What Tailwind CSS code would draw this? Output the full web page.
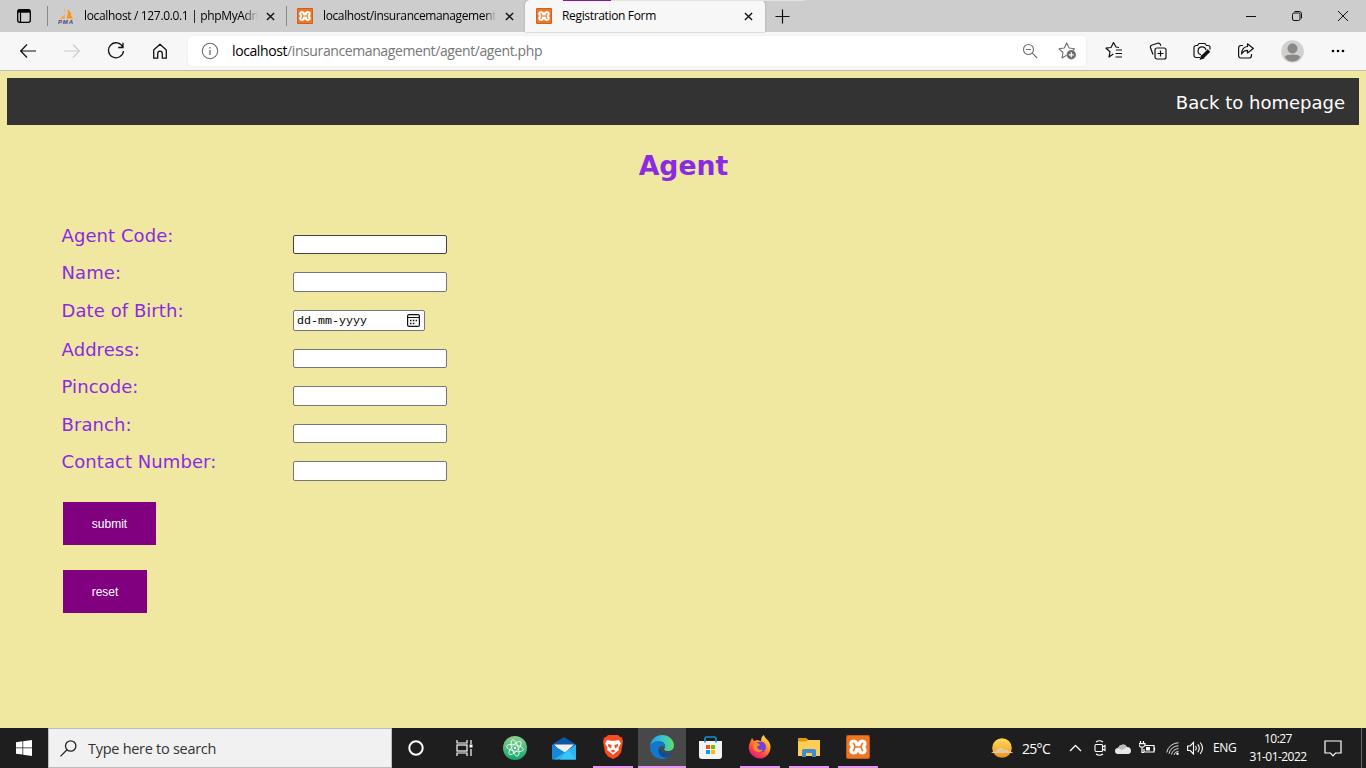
<!DOCTYPE html>
<html lang="en">
<head>
<meta charset="utf-8">
<title>Registration Form</title>
<script src="https://cdn.jsdelivr.net/npm/@tailwindcss/browser@4"></script>
</head>
<body class="w-[1366px] h-[768px] overflow-hidden flex flex-col bg-[#f0e7a0] font-['Open_Sans','Noto_Sans',sans-serif] text-black">
<svg class="hidden">
  <symbol id="xampp" viewBox="0 0 24 24">
    <rect width="24" height="24" rx="2" fill="#c8591a"/><rect x="1" y="1" width="22" height="22" rx="1.5" fill="#ee7724"/>
    <path d="M8 4.500Q10.500 4.500 12 7 13.500 4.500 16 4.500C20.500 4.500 22 9 19.300 12 22 15 20.500 19.500 16 19.500Q13.500 19.500 12 17 10.500 19.500 8 19.500C3.500 19.500 2 15 4.700 12 2 9 3.500 4.500 8 4.500z" fill="#fff"/>
    <path d="M7.500 8.500Q9 9.500 8.800 12T7.500 15.500M16.500 8.500Q15 9.500 15.200 12t1.300 3.500M9 12h6" fill="none" stroke="#ee7724" stroke-width="1.700" stroke-linecap="round"/>
  </symbol>
  <symbol id="x" viewBox="0 0 10 10"><path d="M1 1l8 8M9 1l-8 8" stroke="#111" stroke-width="1.500"/></symbol>
</svg>

<!-- Tab strip -->
<header class="h-8 shrink-0 flex items-center bg-[#cdcdcd] text-[12px] leading-4">
  <div class="w-[47px] flex justify-center"><svg width="16" height="16" viewBox="0 0 16 16" fill="none" stroke="#000"><rect x="1.700" y="1.700" width="12.600" height="12.600" rx="2" stroke-width="1.300"/><path d="M2 3.200h12" stroke-width="3"/><path d="M4.500 4v10" stroke-width="1.200"/></svg></div>
  <div class="w-px h-5 bg-[#8a8a8a]"></div>
  <div class="w-[238px] flex items-center pl-[10px]">
    <svg width="16" height="16" viewBox="0 0 16 16"><path d="M6.500 0C8 4 7 8 1.500 10.500h5.300z" fill="#f7a23a"/><path d="M9.500 1c3 3 5 6 5.500 9.500H8.500C10 7 10 4 9.500 1z" fill="#f79420"/><path d="M0 9.500q2-1 3 .5M12.500 6l3 4" stroke="#fbc98a" fill="none"/><text x="0" y="15.700" font-family="Liberation Sans" font-size="6" font-weight="700" font-style="italic" fill="#45486f" textLength="15">PMA</text></svg>
    <span class="ml-[10px] w-[174px] whitespace-nowrap tracking-[-0.34px] [mask-image:linear-gradient(to_right,black_92%,transparent)]">localhost / 127.0.0.1 | phpMyAdm</span>
    <svg class="ml-[8px]" width="9" height="9"><use href="#x"/></svg>
  </div>
  <div class="w-px h-5 bg-[#8a8a8a]"></div>
  <div class="w-[238px] flex items-center pl-[10px]">
    <svg width="16" height="16"><use href="#xampp"/></svg>
    <span class="ml-[10px] w-[173px] whitespace-nowrap tracking-[-0.38px] [mask-image:linear-gradient(to_right,black_94%,transparent)]">localhost/insurancemanagement</span>
    <svg class="ml-[9px]" width="9" height="9"><use href="#x"/></svg>
  </div>
  <div class="w-[240px] h-8 flex items-center rounded-t-[5px] bg-[#f7f7f7] pl-[11px] relative shadow-[0_0_2px_#999]">
    <svg width="16" height="16"><use href="#xampp"/></svg>
    <span class="ml-[10px] w-[174px] whitespace-nowrap tracking-[-0.34px]">Registration Form</span>
    <svg class="ml-[8px]" width="9" height="9"><use href="#x"/></svg>
    <div class="absolute left-[38px] top-0 w-[48px] h-px bg-[#881798]"></div>
    <div class="absolute left-[86px] top-0 w-[193px] h-px bg-[#e3e3e3]"></div>
  </div>
  <div class="w-[35px] flex justify-center"><svg width="15" height="15" viewBox="0 0 15 15"><path d="M7.500 .5v14M.5 7.500h14" stroke="#111" stroke-width="1.200"/></svg></div>
  <div class="ml-auto flex items-center">
    <div class="w-[46px] flex justify-center"><svg width="10" height="10"><path d="M0 5.500h10" stroke="#111"/></svg></div>
    <div class="w-[46px] flex justify-center"><svg width="10" height="10" viewBox="0 0 10 10" fill="none" stroke="#111"><rect x=".5" y="2" width="7.500" height="7.500" rx="1.500"/><path d="M2.500 .5H7a2.500 2.500 0 0 1 2.500 2.500v4.500"/></svg></div>
    <div class="w-[46px] flex justify-center"><svg width="10" height="10"><path d="M0 0l10 10M10 0L0 10" stroke="#111"/></svg></div>
  </div>
</header>

<!-- Toolbar -->
<div class="h-[39px] shrink-0 flex items-center bg-[#f7f7f7] border-b border-[#bcbcbc] pl-[6px]">
  <div class="w-11 flex justify-center"><svg width="16" height="14" viewBox="0 0 16 14" fill="none" stroke="#111" stroke-width="1.200"><path d="M.5 7H16M7 .5L.7 7 7 13.500"/></svg></div>
  <div class="w-11 flex justify-center"><svg width="16" height="14" viewBox="0 0 16 14" fill="none" stroke="#ccc" stroke-width="1.200"><path d="M0 7h15.500M9 .5L15.300 7 9 13.500"/></svg></div>
  <div class="w-11 flex justify-center"><svg width="18" height="18" viewBox="0 0 18 18" fill="none" stroke="#111" stroke-width="1.300"><path d="M15.800 5A7.500 7.500 0 1 0 16.500 9M16 .8V5.500h-4.800"/></svg></div>
  <div class="w-11 flex justify-center"><svg width="16" height="17" viewBox="0 0 16 17" fill="none" stroke="#111" stroke-width="1.300"><path d="M8 1.200L1.700 7v8.200h4V10.500a2.300 2.300 0 0 1 4.600 0v4.700h4V7z" stroke-linejoin="round"/></svg></div>
  <div class="ml-[6px] w-[898px] h-[30px] rounded-[4px] bg-white flex items-center pl-[13px] shadow-[0_0_2px_#e5e5e5]">
    <svg width="18" height="18" viewBox="0 0 18 18" fill="none" stroke="#6e6e6e" stroke-width="1.100"><circle cx="9" cy="9" r="7.700"/><path d="M9 8v5M9 5v1.500" stroke-width="1.300"/></svg>
    <div class="ml-[13px] w-[311px] whitespace-nowrap text-[14px] leading-5 tracking-[-0.4px] text-[#767676]"><span class="text-black">localhost</span>/insurancemanagement/agent/agent.php</div>
    <svg class="ml-[479px]" width="16" height="16" viewBox="0 0 16 16" fill="none" stroke="#6e6e6e" stroke-width="1.100"><circle cx="6.500" cy="6.500" r="5"/><path d="M10.200 10.200l5 4.800M4 6.500h5"/></svg>
    <svg class="ml-[20px]" width="19" height="18" viewBox="0 0 19 18" fill="none" stroke="#6e6e6e" stroke-width="1.100"><path d="M8.500 13.300L4 16l1-5.500L1 6.800l5.300-.8L8.700 1l2.400 5 5.400.8-2 2" stroke-linejoin="round"/><circle cx="13.300" cy="12.800" r="4.700" fill="#6e6e6e" stroke="none"/><path d="M13.300 10.300v5M10.800 12.800h5" stroke="#fff" stroke-width="1.200"/></svg>
  </div>
  <div class="ml-[6px] w-11 flex justify-center"><svg width="18" height="18" viewBox="0 0 18 18" fill="none" stroke="#111" stroke-width="1.200"><path d="M8.300 12.600L4 15.500l1-5.300L1 6.700l5-.7 2.500-5L11 5.500l3 .5M11 8.500h6M10.500 12H17M10.500 15.500H17" transform="translate(0 -.5)" stroke-linejoin="round"/></svg></div>
  <div class="w-11 flex justify-center"><svg width="18" height="18" viewBox="0 0 18 18" fill="none" stroke="#111" stroke-width="1.200"><rect x="6" y="6" width="11" height="11" rx="2"/><path d="M11.500 8.500v6M8.500 11.500h6M4 12.500L1.500 5.800Q1 4 2.500 3.300L8.600 1.200Q10.500.6 11.300 2.300l.5 1.500M1 3.800h1"/></svg></div>
  <div class="w-11 flex justify-center"><svg width="18" height="18" viewBox="0 0 18 18" fill="none" stroke="#111" stroke-width="1.200"><path d="M7 15.500H3a2 2 0 0 1-2-2V5.500a2 2 0 0 1 2-2h1.500L6 1.500h6l1.500 2H15a2 2 0 0 1 2 2v2M8 12.700a4 4 0 1 1 5-4.500"/><path d="M16 8.500L9.500 15" stroke-width="3.600"/><path d="M8.500 14l-1 3 3-1z" fill="#111"/></svg></div>
  <div class="w-11 flex justify-center pl-px"><svg width="17" height="18" viewBox="1 0 17 18" fill="none" stroke="#111" stroke-width="1.200"><path d="M6 3.500H4a2.500 2.500 0 0 0-2.400 2.500v7.500A2.500 2.500 0 0 0 4 16h8a2.500 2.500 0 0 0 2.500-2.500V12M10.500 1.800l5.800 4.700-5.800 4.500V8.300C8 8.300 6 9.500 4.500 12 4.800 7.500 7 4.800 10.500 4.500z" stroke-linejoin="round"/></svg></div>
  <div class="w-12 flex justify-center"><svg width="23" height="23" viewBox="0 0 23 23"><circle cx="11.500" cy="11.500" r="11.300" fill="#d2d0ce"/><circle cx="11.500" cy="8.500" r="5" fill="#8a8886"/><path d="M3.700 17c2-3.200 13.600-3.200 15.600 0-3.500 6-12 6-15.600 0z" fill="#8a8886"/></svg></div>
  <div class="w-11 flex justify-center"><svg width="14" height="4"><circle cx="2" cy="2" r="1.300"/><circle cx="7" cy="2" r="1.300"/><circle cx="12" cy="2" r="1.300"/></svg></div>
</div>

<!-- Page -->
<main class="h-[657px] shrink-0 pt-[7px] px-[7px] font-['DejaVu_Sans',sans-serif] text-[#8a2be2]">
  <nav class="h-[47px] bg-[#333] flex items-center justify-end pr-[14px] pt-[2px] text-[18px] text-white"><a>Back to homepage</a></nav>
  <h1 class="mt-[25px] h-8 leading-8 pl-px text-center text-[26.700px] font-bold">Agent</h1>
  <form class="mt-[44px] pl-[54.600px] text-[18px] tracking-[0.060px] leading-5 flex flex-col items-start">
    <div class="h-[37px] flex"><label class="w-[231.400px]">Agent Code:</label><input class="mt-[9px] w-[154px] h-[19px] bg-white border border-[#444] rounded-[2px]"></div>
    <div class="h-[38px] flex"><label class="w-[231.400px]">Name:</label><input class="mt-[9px] w-[154px] h-[20px] bg-white border border-[#767676] rounded-[2px]"></div>
    <div class="h-[39px] flex"><label class="w-[231.400px]">Date of Birth:</label>
      <div class="mt-[9px] w-[132px] h-[21px] bg-white border border-[#767676] rounded-[2px] flex items-center justify-between pl-[3px] pr-1 text-black font-['Liberation_Mono',monospace] text-[11.670px] tracking-normal"><span>dd-mm-yyyy</span>
        <svg width="13" height="13" viewBox="0 0 13 13" fill="none" stroke="#111"><rect x=".6" y=".6" width="11.800" height="11.800" rx="1.500" stroke-width="1.200"/><path d="M1 3.500h11" stroke-width="1"/><path d="M3 6.500h1.500M5.800 6.500h1.500M8.600 6.500H10M3 9.500h1.500M5.800 9.500h1.500" stroke-width="1.500"/></svg></div></div>
    <div class="h-[37px] flex"><label class="w-[231.400px]">Address:</label><input class="mt-[9px] w-[154px] h-[19px] bg-white border border-[#767676] rounded-[2px]"></div>
    <div class="h-[38px] flex"><label class="w-[231.400px]">Pincode:</label><input class="mt-[9px] w-[154px] h-[20px] bg-white border border-[#767676] rounded-[2px]"></div>
    <div class="h-[37px] flex"><label class="w-[231.400px]">Branch:</label><input class="mt-[9px] w-[154px] h-[19px] bg-white border border-[#767676] rounded-[2px]"></div>
    <div class="h-[50px] flex"><label class="w-[231.400px]">Contact Number:</label><input class="mt-[9px] w-[154px] h-[20px] bg-white border border-[#767676] rounded-[2px]"></div>
    <button type="button" class="ml-[1.400px] w-[93px] h-[43px] bg-[#800080] text-white font-['Liberation_Sans',sans-serif] text-[12px] tracking-normal">submit</button>
    <button type="button" class="mt-[25px] ml-[1.400px] w-[84px] h-[43px] bg-[#800080] text-white font-['Liberation_Sans',sans-serif] text-[12px] tracking-normal">reset</button>
  </form>
</main>

<!-- Taskbar -->
<footer class="h-10 shrink-0 flex items-center bg-[#1e1e1e] text-white">
  <div class="w-12 flex justify-center"><svg width="16" height="16" viewBox="0 0 16 16" fill="#fff"><path d="M0 2.200l6.500-.9v6.200H0zM7.200 1.200L16 0v7.500H7.200zM0 8.300h6.500v6.200L0 13.700zM7.200 8.300H16V16l-8.800-1.300z"/></svg></div>
  <div class="w-[344px] h-10 bg-[#f1f1f1] border border-[#bcbcbc] flex items-center pl-[11px] text-[14.500px] tracking-[-0.28px] text-[#333]">
    <svg width="17" height="17" viewBox="0 0 17 17" fill="none" stroke="#222" stroke-width="1.300"><circle cx="10.700" cy="6" r="5.200"/><path d="M7 9.800L.5 16.400"/></svg>
    <span class="ml-[11px] pt-[2px]">Type here to search</span>
  </div>
  <div class="w-12 flex justify-center"><svg width="16" height="16"><circle cx="8" cy="8" r="6.700" fill="none" stroke="#fff" stroke-width="2"/></svg></div>
  <div class="w-12 mr-[2px] flex justify-center"><svg width="17" height="16" viewBox="0 0 17 16" fill="none" stroke="#fff" stroke-width="1.200"><path d="M1 0v3h10V0M1 16v-3h10v3M15 0v4M15 9v7"/><rect x="1" y="5" width="10" height="6"/><path d="M13.500 6h3" stroke-width="3"/></svg></div>
  <!-- Atom -->
  <div class="w-[49px] flex justify-center"><svg width="24" height="24" viewBox="0 0 24 24"><defs><linearGradient id="at" x1="0" x2="0" y2="1"><stop stop-color="#8fcf91"/><stop offset="1" stop-color="#10a66f"/></linearGradient></defs><circle cx="12" cy="12" r="12" fill="url(#at)"/><g fill="none" stroke="#eafff1" stroke-width=".9"><ellipse cx="12" cy="12" rx="8.500" ry="3.200" transform="rotate(12 12 12)"/><ellipse cx="12" cy="12" rx="8.500" ry="3.200" transform="rotate(72 12 12)"/><ellipse cx="12" cy="12" rx="8.500" ry="3.200" transform="rotate(132 12 12)"/></g><circle cx="12" cy="12" r="1.200" fill="#fff"/></svg></div>
  <!-- Mail -->
  <div class="w-[49px] flex justify-center"><svg width="24" height="23" viewBox="0 0 24 23"><path d="M0 7.500L12 0l12 7.500V10H0z" fill="#0b58a8"/><path d="M2 7.500h20L14 15H9z" fill="#f1f1f1"/><path d="M0 7.500L14 16l-9 6.500H0z" fill="#1987d8"/><path d="M24 7.500v15H2L13 15z" fill="#2fb4f2"/><path d="M24 22.500H8L16 13z" fill="#35c5f8"/></svg></div>
  <!-- Brave -->
  <div class="w-[49px] mr-px h-10 flex flex-col items-center"><div class="flex-1 flex items-center"><svg width="20" height="24" viewBox="0 0 20 24"><path d="M5 0h10l2 2 2 .5 1 4-2 11-3 4-5 2.500-5-2.500-3-4L0 6.500l1-4L3 2z" fill="#fb4a20"/><path d="M4 5l4 .7h4L16 5l2 3.500-2.500 4 .5 2.500-4 3-2 2-2-2-4-3 .5-2.500L2 8.500z" fill="#fff"/><path d="M5 9l3.500 1v2l-1 1.500L5 11zM15 9l-3.500 1v2l1 1.500L15 11zM7.500 16l2.500-1.500 2.500 1.500-2.500 1.500z" fill="#fb4a20"/></svg></div><div class="w-10 h-[2px] bg-[#e695f0]"></div></div>
  <!-- Edge -->
  <div class="w-12 h-10 flex flex-col items-center bg-[#484848]"><div class="flex-1 flex items-center"><svg width="24" height="24" viewBox="0 0 24 24"><defs><linearGradient id="e1" x1="0" x2="1"><stop stop-color="#1ba0e2"/><stop offset=".5" stop-color="#33c3d8"/><stop offset="1" stop-color="#5fdd62"/></linearGradient></defs><path d="M0 11C1 4 6 0 12 0c7 0 12 5 12 10.500 0 4-3 5.500-6 5.500-3 0-4.500-1-3.500-2.500C17 9 12 5 7 6.500 3 7.500 1 9 0 11z" fill="url(#e1)"/><path d="M0 12C1 7.500 5 6 9 6.500c4 .5 6 3 6 5.500-5-3-8 2-5.500 6 2 3.500 6 5.500 9.500 3.500-2 2-4.500 2.500-7 2.500C5 24 0 19 0 12z" fill="#1378cb"/><path d="M9.500 12.500C7 16 9 22 15 22.500c3 0 6-2 8-5-4 2-12 1.500-13.500-5z" fill="#124e94"/></svg></div><div class="w-12 h-[2px] bg-[#e695f0]"></div></div>
  <!-- Store -->
  <div class="w-[49px] flex justify-center"><svg width="23" height="24" viewBox="0 0 23 24"><path d="M0 5h23v15q0 3-3 3H3q-3 0-3-3z" fill="#f3f3f3"/><path d="M6 6.500V2.500Q6 1 7.500 1h8Q17 1 17 2.500v4" fill="none" stroke="#1590cc" stroke-width="1.700"/><path d="M7 9h4v4H7z" fill="#f25022"/><path d="M12 9h4v4h-4z" fill="#7fba00"/><path d="M7 14h4v4H7z" fill="#00a4ef"/><path d="M12 14h4v4h-4z" fill="#ffb900"/></svg></div>
  <!-- Firefox -->
  <div class="w-[49px] h-10 flex flex-col items-center"><div class="flex-1 flex items-center"><svg width="24" height="24" viewBox="0 0 24 24"><defs><linearGradient id="ff" x1=".9" y1="0" x2=".3" y2="1"><stop stop-color="#fff04a"/><stop offset=".4" stop-color="#ff9a25"/><stop offset=".7" stop-color="#ff4b3e"/><stop offset="1" stop-color="#e31587"/></linearGradient></defs><path d="M4 3l2 3 3-1 4 1c0-3 1-5 3-6 0 3 6 5 6.500 11C23 18 18 23.500 12 23.500S.5 18 .8 12C1 8 3 6 4 3z" fill="url(#ff)"/><circle cx="12.500" cy="12" r="5.500" fill="#7340df"/><path d="M5 9c3-2 6-1 7 1l-3 1.500c0 3 3 4 6 3-2 4-8 3-9.500-1z" fill="#ff8a22"/></svg></div><div class="w-10 h-[2px] bg-[#e695f0]"></div></div>
  <!-- File Explorer -->
  <div class="w-[49px] h-10 flex flex-col items-center"><div class="flex-1 flex items-center"><svg width="22" height="19" viewBox="0 0 22 19"><path d="M0 0h8l2 2h12v16H0z" fill="#fdcd56"/><path d="M0 0h8l2 2-2 1.500H0z" fill="#d99a10"/><path d="M4 19v-6q0-2 2-2h10q2 0 2 2v6h-4v-4H8v4z" fill="#3b8dd0"/></svg></div><div class="w-10 h-[2px] bg-[#e695f0]"></div></div>
  <div class="w-[49px] h-10 flex flex-col items-center"><div class="flex-1 flex items-center"><svg width="24" height="24"><use href="#xampp"/></svg></div><div class="w-10 h-[2px] bg-[#e695f0]"></div></div>

  <!-- Tray -->
  <div class="ml-auto flex items-center h-10 text-[12px]">
    <svg width="22" height="20" viewBox="0 0 22 20"><defs><linearGradient id="sun" x1="0" x2="0" y2="1"><stop stop-color="#ffdc5c"/><stop offset="1" stop-color="#f19218"/></linearGradient></defs><circle cx="11" cy="10" r="9.800" fill="url(#sun)"/><path d="M0 15c1-1.500 4-1 5-2 2-4 7-4 8-1 3-1 4 0 5 1.500 2 0 3 .5 4 1.500z" fill="#e2c8a5"/></svg>
    <span class="ml-[9px] w-[30px] pt-px text-[14px] tracking-[-0.7px] whitespace-nowrap">25°C</span>
    <svg class="ml-[17px]" width="13" height="8" viewBox="0 0 13 8"><path d="M1 7l5.500-5.500L12 7" fill="none" stroke="#fff" stroke-width="1.300"/></svg>
    <svg class="ml-[12px]" width="12" height="16" viewBox="0 0 12 16" fill="none" stroke="#fff" stroke-width="1.100"><rect x="1" y="4.500" width="7.500" height="7" rx="1"/><path d="M8.500 7l2.500-1.500v5L8.500 9M2 2Q5.500-.5 9 2M2 14q3.500 2.500 7 0"/></svg>
    <svg class="ml-[9px]" width="16" height="11" viewBox="0 0 16 11"><path d="M3 11a3 3 0 0 1 0-6 5 5 0 0 1 9-1c3 0 4 2 4 3.700S15 11 13 11z" fill="#e8e8e8"/><path d="M3 5a5 5 0 0 1 9-1L7 7z" fill="#bbb"/></svg>
    <svg class="ml-[8px]" width="17" height="14" viewBox="0 0 17 14" fill="none" stroke="#fff" stroke-width="1.200"><path d="M6 4.500h9V11H5V8M15.500 6.500v3M1.500 0v2M4.500 0v2M0 2.600h6v2L4.500 6h-3L0 4.500zM3 6v5.500h2"/><path d="M7 6h4v3.500H7z" fill="#fff" stroke="none"/></svg>
    <svg class="ml-[10px]" width="13" height="13" viewBox="0 0 13 13" fill="none" stroke="#ddd"><path d="M.7 10.500A12 12 0 0 1 12.500.8M3 11.800a9.500 9.500 0 0 1 9.500-8M5.500 12.500a7 7 0 0 1 7-5.800M8 13a4.500 4.500 0 0 1 4.500-3.600"/><circle cx="11.500" cy="11.800" r="1.200" fill="#fff" stroke="none"/></svg>
    <svg class="ml-[8px]" width="17" height="14" viewBox="0 0 17 14" fill="none" stroke="#fff" stroke-width="1.100"><path d="M.6 5v4.500h2.600L6.500 13V1.500L3.200 5zM8.500 5q1.500 2 0 4.500M10.800 3.300q3 3.800 0 8M13.200 1.500q4.600 5.500 0 11.300"/></svg>
    <span class="ml-[9px] w-[24px] text-[12px] tracking-[-0.4px]">ENG</span>
    <div class="ml-[7px] w-[68px] text-center leading-[18px] text-[12px] tracking-[-0.55px] whitespace-nowrap"><div>10:27</div><div>31-01-2022</div></div>
    <svg class="ml-[12px]" width="18" height="17" viewBox="0 0 18 17"><path d="M1 1h16v12h-5.500L9 15.800 6.500 13H1z" fill="none" stroke="#fff" stroke-width="1.200"/></svg>
    <div class="ml-[19px] mr-1 w-px h-10 bg-[#6a6a6a]"></div>
  </div>
</footer>
</body>
</html>
